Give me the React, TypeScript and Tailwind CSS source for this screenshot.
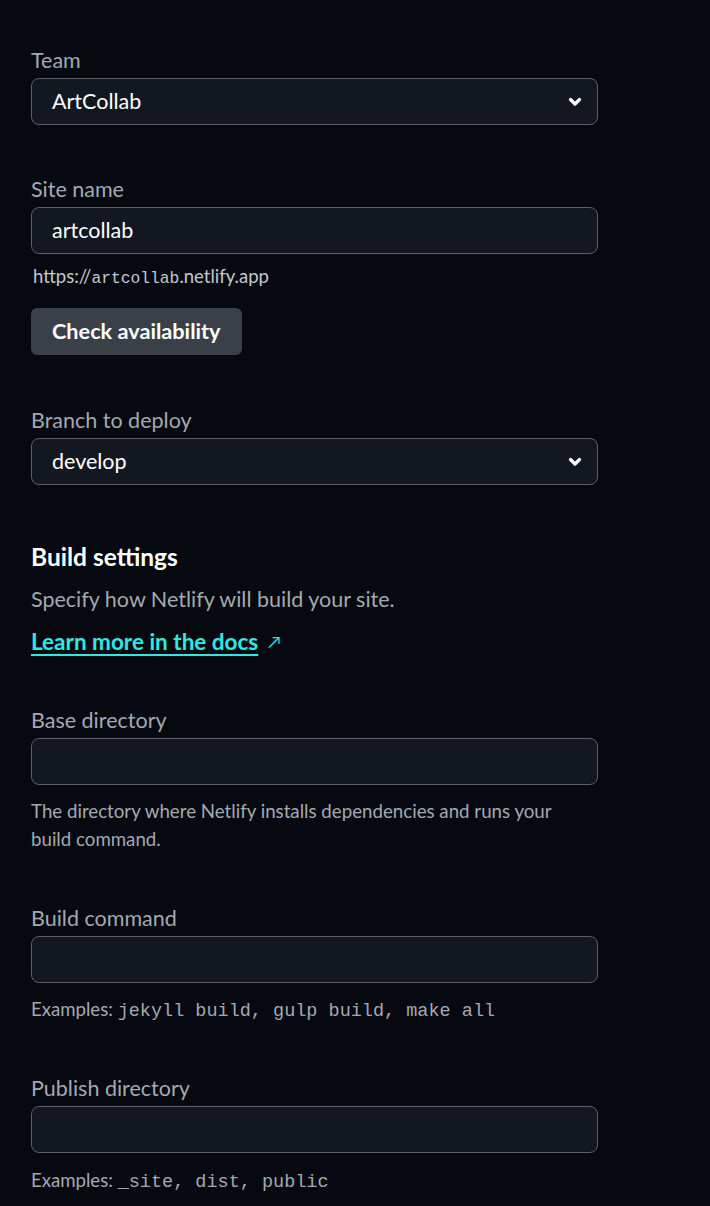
import React from "react";

const font = { fontFamily: '"Segoe UI", Lato, "Noto Sans", sans-serif' };
const mono = { fontFamily: '"Liberation Mono", "Courier New", monospace' };

function Chevron() {
  return (
    <svg width="16" height="16" viewBox="0 0 16 16" className="text-white">
      <path d="M3.5 5.5 L8 10 L12.5 5.5" fill="none" stroke="currentColor" strokeWidth="3.2" strokeLinecap="round" strokeLinejoin="round" />
    </svg>
  );
}

function Label({ children }: { children: React.ReactNode }) {
  return <div className="text-[21.5px] leading-[28px] text-[#a3a9b0] mb-[4px]">{children}</div>;
}

function Box({ children, chevron }: { children?: React.ReactNode; chevron?: boolean }) {
  return (
    <div className="h-[47px] w-[567px] rounded-[8px] border border-[#5b6068] bg-[#131820] flex items-center justify-between pl-[20px] pr-[14px] text-[21.5px] text-white">
      <span>{children}</span>
      {chevron && <Chevron />}
    </div>
  );
}

export default function App() {
  return (
    <div className="min-h-[1206px] bg-[#060a10] pl-[31px] pt-[46px]" style={font}>
      <Label>Team</Label>
      <Box chevron>ArtCollab</Box>

      <div className="mt-[50px]">
        <Label>Site name</Label>
        <Box>artcollab</Box>
        <div className="mt-[10px] ml-[2px] text-[18.5px] leading-[24px] text-[#c4c8cd]">
          https://<span className="text-[16.3px]" style={mono}>artcollab</span>.netlify.app
        </div>
        <button className="mt-[17px] h-[47px] px-[21px] rounded-[6px] bg-[#3a4048] text-white font-bold text-[21.7px]">
          Check availability
        </button>
      </div>

      <div className="mt-[51px]">
        <Label>Branch to deploy</Label>
        <Box chevron>develop</Box>
      </div>

      <div className="mt-[57px] text-[24.5px] leading-[30px] font-bold text-white">Build settings</div>
      <div className="mt-[13px] text-[21.5px] leading-[28px] text-[#a3a9b0]">Specify how Netlify will build your site.</div>
      <div className="mt-[15px] text-[22.5px] leading-[28px] flex items-center gap-[10px]">
        <span className="font-bold text-[#32e6e2] underline underline-offset-[4px] decoration-[2px]">Learn more in the docs</span>
        <span className="text-[#32e6e2] text-[17px]">↗</span>
      </div>

      <div className="mt-[50px]">
        <Label>Base directory</Label>
        <Box />
        <div className="mt-[12px] w-[560px] text-[18.7px] leading-[28px] text-[#a3a9b0]">
          The directory where Netlify installs dependencies and runs your build command.
        </div>
      </div>

      <div className="mt-[51px]">
        <Label>Build command</Label>
        <Box />
        <div className="mt-[12px] text-[18.6px] leading-[28px] text-[#a3a9b0]">
          Examples: <span className="text-[18.5px]" style={mono}>jekyll build, gulp build, make all</span>
        </div>
      </div>

      <div className="mt-[48px]">
        <Label>Publish directory</Label>
        <Box />
        <div className="mt-[13px] text-[18.6px] leading-[28px] text-[#a3a9b0]">
          Examples: <span className="text-[18.5px]" style={mono}>_site, dist, public</span>
        </div>
      </div>
    </div>
  );
}
